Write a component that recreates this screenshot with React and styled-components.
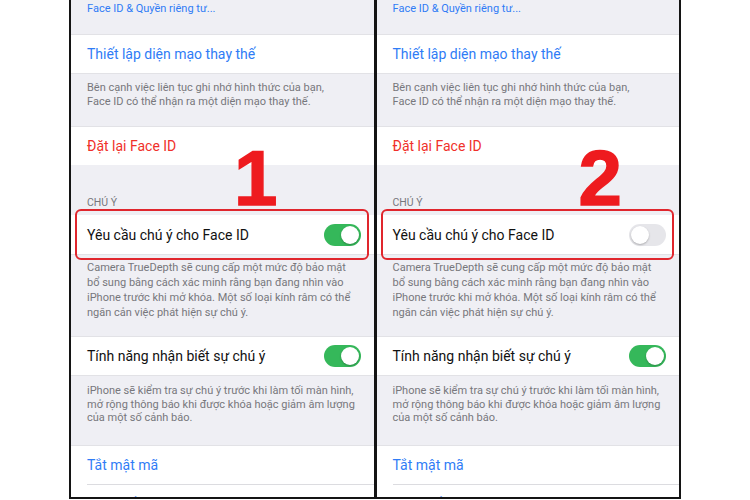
import React from "react";
import styled, { createGlobalStyle } from "styled-components";

const GlobalStyle = createGlobalStyle`
  html, body {
    margin: 0;
    padding: 0;
    background: #ffffff;
  }
  body {
    font-family: "Roboto", "Liberation Sans", sans-serif;
    -webkit-font-smoothing: antialiased;
  }
`;

const Page = styled.div`
  width: 750px;
  height: 500px;
  overflow: hidden;
  background: #ffffff;
`;

const Frame = styled.div`
  display: flex;
  margin-left: 69px;
  width: 612px;
  height: 499px;
  box-sizing: border-box;
  border: 2px solid #141414;
  border-top: none;
  background: #141414;
  gap: 3px;
`;

const Screen = styled.div`
  position: relative;
  flex: 1;
  background: #efeff4;
  overflow: hidden;
`;

const TopLink = styled.div`
  height: 35px;
  box-sizing: border-box;
  padding: 2px 16px 0;
  font-size: 11px;
  line-height: 14px;
  color: #2f7cf6;
  border-bottom: 1px solid #e2e2e6;
`;

const Row = styled.div`
  position: relative;
  display: flex;
  align-items: center;
  justify-content: space-between;
  height: ${(p) => p.h || 38}px;
  box-sizing: border-box;
  padding: 0 13px 0 16px;
  background: #ffffff;
  font-size: 14px;
  white-space: nowrap;
  color: ${(p) =>
    p.tone === "blue" ? "#2f7cf6" : p.tone === "red" ? "#f0302a" : "#111111"};
  ${(p) => p.divider && "&::after { content: ''; position: absolute; left: 16px; right: 0; bottom: 0; height: 1px; background: #dcdce0; }"}
`;

const Footer = styled.div`
  padding: ${(p) => p.pad};
  font-size: 11px;
  line-height: ${(p) => p.lh}px;
  white-space: nowrap;
  color: #77777c;
  border-top: 1px solid #e2e2e6;
  border-bottom: 1px solid #e2e2e6;
`;

const SectionHead = styled.div`
  height: 50px;
  box-sizing: border-box;
  display: flex;
  align-items: flex-end;
  padding: 0 16px 5px;
  font-size: 10.5px;
  line-height: 14px;
  color: #77777c;
  text-transform: uppercase;
`;

const Toggle = styled.div`
  position: relative;
  flex: none;
  width: 37px;
  height: 22px;
  border-radius: 11px;
  background: ${(p) => (p.on ? "#35b85a" : "#e6e6ea")};
  &::after {
    content: "";
    position: absolute;
    top: 2px;
    left: ${(p) => (p.on ? "17px" : "2px")};
    width: 18px;
    height: 18px;
    border-radius: 50%;
    background: #ffffff;
    box-shadow: 0 1px 2px rgba(0, 0, 0, 0.25);
  }
`;

const Highlight = styled.div`
  position: absolute;
  top: -6px;
  bottom: -6px;
  left: 4px;
  right: 5px;
  border: 2px solid #e0262d;
  border-radius: 6px;
  pointer-events: none;
`;

const StepNumber = styled.div`
  position: absolute;
  top: 140px;
  left: ${(p) => p.left}px;
  font-family: "Liberation Sans", Arial, sans-serif;
  font-weight: 700;
  font-size: 78px;
  line-height: 76px;
  color: #ee1b1f;
  -webkit-text-stroke: 1.5px #ee1b1f;
`;

const Phone = ({ step, attention, numberLeft }) => (
  <Screen>
    <TopLink>Face ID &amp; Quyền riêng tư...</TopLink>
    <Row tone="blue">Thiết lập diện mạo thay thế</Row>
    <Footer pad="7px 16px 18px" lh={13.5}>
      Bên cạnh việc liên tục ghi nhớ hình thức của bạn,
      <br />
      Face ID có thể nhận ra một diện mạo thay thế.
    </Footer>
    <Row tone="red">Đặt lại Face ID</Row>
    <SectionHead>Chú ý</SectionHead>
    <Row h={39}>
      Yêu cầu chú ý cho Face ID
      <Toggle on={attention} />
      <Highlight />
    </Row>
    <Footer pad="5px 16px 16px" lh={15}>
      Camera TrueDepth sẽ cung cấp một mức độ bảo mật
      <br />
      bổ sung bằng cách xác minh rằng bạn đang nhìn vào
      <br />
      iPhone trước khi mở khóa. Một số loại kính râm có thể
      <br />
      ngăn cản việc phát hiện sự chú ý.
    </Footer>
    <Row>
      Tính năng nhận biết sự chú ý
      <Toggle on />
    </Row>
    <Footer pad="8px 16px 20px" lh={13.5}>
      iPhone sẽ kiểm tra sự chú ý trước khi làm tối màn hình,
      <br />
      mở rộng thông báo khi được khóa hoặc giảm âm lượng
      <br />
      của một số cảnh báo.
    </Footer>
    <Row tone="blue" h={39} divider>
      Tắt mật mã
    </Row>
    <Row tone="blue">Thay đổi mật mã</Row>
    <StepNumber left={numberLeft}>{step}</StepNumber>
  </Screen>
);

export default function App() {
  return (
    <Page>
      <GlobalStyle />
      <Frame>
        <Phone step="1" attention numberLeft={163} />
        <Phone step="2" attention={false} numberLeft={202} />
      </Frame>
    </Page>
  );
}
